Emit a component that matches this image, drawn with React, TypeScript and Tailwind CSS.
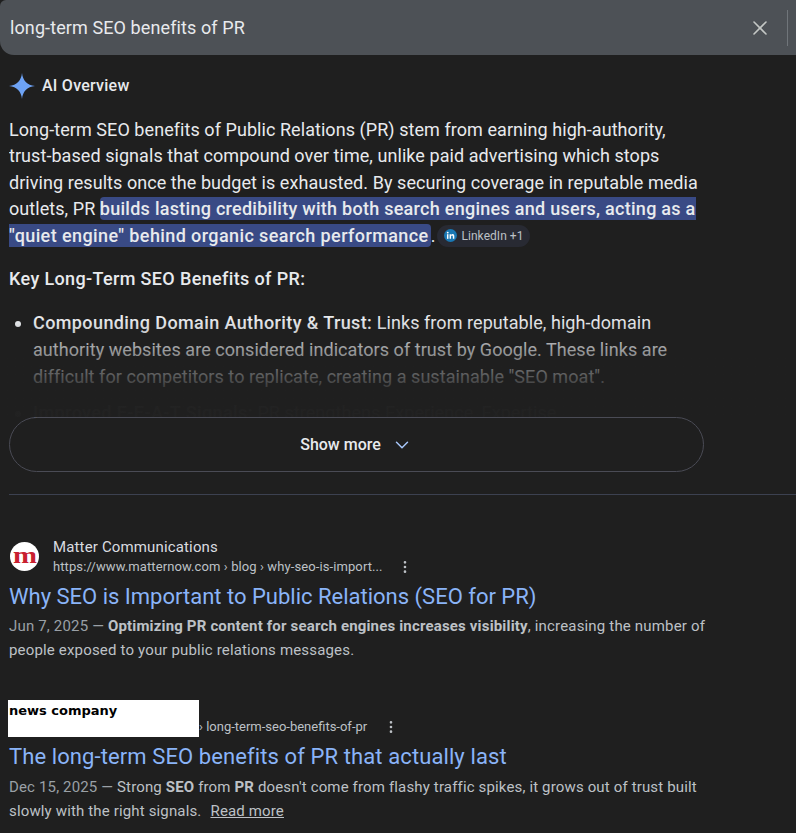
import React from 'react';
import { ChevronDown, EllipsisVertical, X } from 'lucide-react';

const Sparkle = () => (
  <svg viewBox="0 0 26 26" className="h-[26px] w-[26px] shrink-0">
    <path d="M13 0C13.8 7.5 18 12.2 26 13C18 13.8 13.8 18.5 13 26C12.2 18.5 8 13.8 0 13C8 12.2 12.2 7.5 13 0Z" fill="#6ea3f5" />
  </svg>
);

const LinkedInDot = () => (
  <svg viewBox="0 0 14 14" className="h-[13px] w-[13px] shrink-0">
    <circle cx="7" cy="7" r="7" fill="#1a78b4" />
    <rect x="3.2" y="5.6" width="1.6" height="5" fill="#fff" />
    <circle cx="4" cy="3.9" r="1" fill="#fff" />
    <path d="M6 5.6h1.5v.8c.4-.6 1-.9 1.7-.9 1.3 0 1.9.9 1.9 2.2v2.9H9.5V8c0-.7-.3-1.1-.9-1.1s-1 .4-1 1.1v2.6H6z" fill="#fff" />
  </svg>
);

const App = () => {
  return (
    <div className="h-[833px] w-[796px] overflow-hidden bg-[#1f1f1f] font-['Roboto',sans-serif] text-[#e8eaed]">
      <div className="flex h-[55px] items-center justify-between rounded-bl-[14px] rounded-tl-[6px] bg-[#4d5156] pl-[10px] pr-2">
        <span className="text-[18px] tracking-[0.1px] text-[#e8eaed]">long-term SEO benefits of PR</span>
        <div className="flex items-center">
          <X className="h-[24px] w-[24px] text-[#c4c7c5]" strokeWidth={1.6} />
          <div className="ml-[15px] h-[36px] w-px bg-[#70757a]" />
        </div>
      </div>

      <div className="flex items-center gap-[7px] pl-[9px] pt-[18px]">
        <Sparkle />
        <span className="text-[16px] font-medium tracking-[0.25px] text-[#e8eaed]">AI Overview</span>
      </div>

      <div className="relative h-[357px] pl-[9px] pt-[18px]">
        <div className="h-[339px] w-[700px] overflow-hidden text-[18px] leading-[26.4px] tracking-[0.06px] text-[#e8eaed]">
          <p>
            Long-term SEO benefits of Public Relations (PR) stem from earning high-authority, trust-based signals that compound over time, unlike paid advertising which stops driving results once the budget is exhausted. By securing coverage in reputable media outlets, PR{' '}
            <mark className="rounded-[4px] bg-[#394a85] py-[1px] pr-[2px] font-medium tracking-[0.27px] text-[#e8eaed]">
              builds lasting credibility with both search engines and users, acting as a{' '}
              <span className="tracking-[0.4px]">"quiet engine" behind organic search performance</span>
            </mark>.
            <span className="ml-[2px] inline-flex h-[22px] translate-y-[-1px] items-center gap-[4px] rounded-full bg-[#282a33] pl-[7px] pr-[6px] align-middle text-[12px] leading-none tracking-[0.05px] text-[#bdc1c6]">
              <LinkedInDot />
              LinkedIn +1
            </span>
          </p>
          <p className="mt-[17px] font-medium tracking-[0.36px]">Key Long-Term SEO Benefits of PR:</p>
          <ul className="mt-[17px] list-disc pl-[24px] leading-[27px]">
            <li>
              <b className="font-medium tracking-[0.4px]">Compounding Domain Authority &amp; Trust:</b> Links from reputable, high-domain authority websites are considered indicators of trust by Google. These links are difficult for competitors to replicate, creating a sustainable "SEO moat".
            </li>
            <li className="mt-[9px]">
              <b className="font-medium tracking-[0.4px]">Improved E-E-A-T Signals:</b> PR strengthens Experience, Expertise,
            </li>
          </ul>
        </div>
        <div className="absolute inset-x-0 bottom-[39px] top-[221px] bg-gradient-to-b from-[#1f1f1f00] via-[#1f1f1ffa] via-80% to-[#1f1f1ffc]" />
        <button className="absolute bottom-[-16px] left-[9px] flex h-[55px] w-[695px] items-center justify-center gap-[10px] rounded-full border border-[#4a4b55] bg-[#1f1f1f] text-[16px] font-medium text-[#e8eaed]">
          Show more
          <ChevronDown className="h-[22px] w-[22px] text-[#a8c7fa]" strokeWidth={1.6} />
        </button>
      </div>

      <div className="ml-[9px] mt-[38px] h-px bg-[#3c4150]" />

      <div className="w-[720px] pl-[9px] pt-[42px]">
        <div className="flex items-start gap-[14px]">
          <div className="ml-px mt-[5px] flex h-[29px] w-[29px] items-center justify-center rounded-full bg-white font-['Liberation_Serif',serif] text-[24px] font-bold leading-none text-[#c8202f]">
            <span className="-translate-y-[2px] scale-x-[1.2]">m</span>
          </div>
          <div>
            <div className="text-[15px] leading-[20px] tracking-[0.15px] text-[#dadce0]">Matter Communications</div>
            <div className="flex items-center text-[13px] leading-[20px] tracking-[0.1px] text-[#bdc1c6]">
              https://www.matternow.com › blog › why-seo-is-import...
              <EllipsisVertical className="ml-[14px] h-[16px] w-[16px] text-[#bdc1c6]" />
            </div>
          </div>
        </div>
        <a className="mt-[6px] block text-[22px] leading-[28px] text-[#8ab4f8]">Why SEO is Important to Public Relations (SEO for PR)</a>
        <p className="mt-[3px] text-[15px] leading-[24px] tracking-[0.17px] text-[#bdc1c6]">
          <span className="text-[#9aa0a6]">Jun 7, 2025 — </span>
          <b className="font-bold">Optimizing PR content for search engines increases visibility</b>, increasing the number of people exposed to your public relations messages.
        </p>

        <div className="relative mt-[38px] flex h-[37px] items-end pl-[180px] text-[13px] leading-[20px] text-[#bdc1c6]">
          <div className="absolute left-[-1px] top-0 z-10 h-[37px] w-[191px] bg-white pl-px font-['DejaVu_Sans',sans-serif] text-[13px] font-bold leading-[21px] text-black">news company</div>
          <span className="flex items-center pl-[10px]">
            › long-term-seo-benefits-of-pr
            <EllipsisVertical className="ml-[16px] h-[16px] w-[16px] text-[#bdc1c6]" />
          </span>
        </div>
        <a className="mt-[6px] block text-[22px] leading-[28px] tracking-[0.1px] text-[#8ab4f8]">The long-term SEO benefits of PR that actually last</a>
        <p className="mt-[4px] text-[15px] leading-[24px] tracking-[0.15px] text-[#bdc1c6]">
          <span className="text-[#9aa0a6]">Dec 15, 2025 — </span>
          Strong <b className="font-bold">SEO</b> from <b className="font-bold">PR</b> doesn't come from flashy traffic spikes, it grows out of trust built slowly with the right signals.
          <a className="ml-[9px] underline">Read more</a>
        </p>
      </div>
    </div>
  );
};

export default App;
